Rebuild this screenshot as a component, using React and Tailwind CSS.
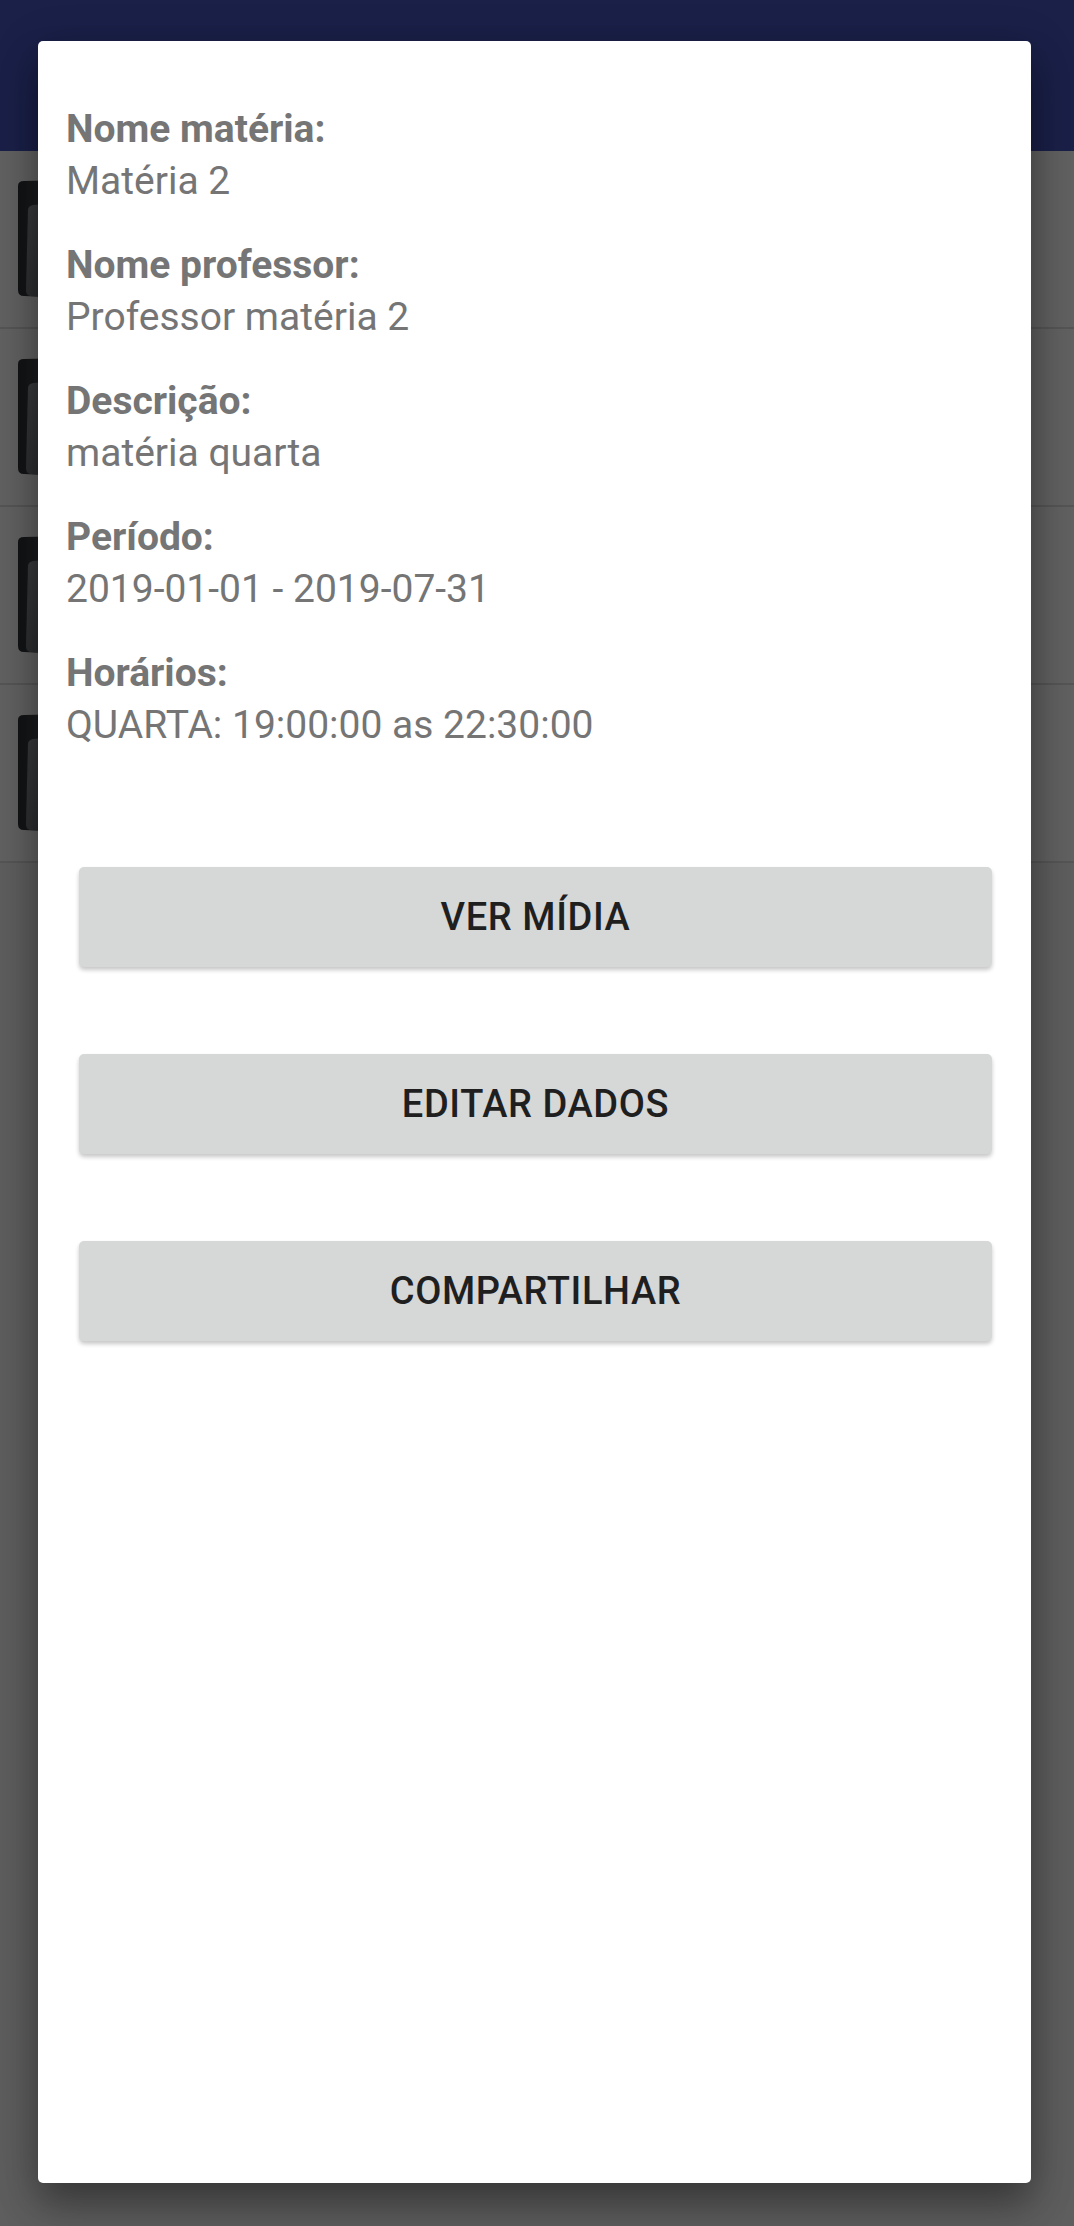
import React from 'react';

const fields = [
  { label: 'Nome matéria:', value: 'Matéria 2' },
  { label: 'Nome professor:', value: 'Professor matéria 2' },
  { label: 'Descrição:', value: 'matéria quarta' },
  { label: 'Período:', value: '2019-01-01 - 2019-07-31' },
  { label: 'Horários:', value: 'QUARTA: 19:00:00 as 22:30:00' },
];

const actions = ['VER MÍDIA', 'EDITAR DADOS', 'COMPARTILHAR'];

// livro escuro que aparece na lista atrás do diálogo
const BookIcon = () => (
  <svg width="60" height="118" viewBox="0 0 60 118">
    <defs>
      <linearGradient id="cover" x1="0" y1="0" x2="1" y2="0">
        <stop offset="0" stopColor="#111214" />
        <stop offset="1" stopColor="#2a2b2d" />
      </linearGradient>
      <linearGradient id="page" x1="0" y1="0" x2="1" y2="1">
        <stop offset="0" stopColor="#3a3b3d" />
        <stop offset="1" stopColor="#222325" />
      </linearGradient>
    </defs>
    <path d="M4 6 Q4 1 10 1 L56 0 L56 118 L10 116 Q4 116 4 110 Z" fill="url(#cover)" />
    <path d="M14 30 Q14 26 19 25 L56 22 L56 118 L16 116 Q12 115 12 110 Z" fill="url(#page)" />
  </svg>
);

const ListRow = () => (
  <div className="h-[178px] border-b-2 border-[#555555] bg-[#616161] flex items-center pl-[14px]">
    <BookIcon />
  </div>
);

export default function App() {
  return (
    <div className="relative w-[1074px] h-[2226px] overflow-hidden bg-[#5e5e5e] font-['Roboto','Liberation_Sans',sans-serif]">
      {/* tela de fundo escurecida */}
      <div className="h-[151px] bg-[#1a2048]" />
      <div className="flex flex-col">
        <ListRow />
        <ListRow />
        <ListRow />
        <ListRow />
      </div>

      {/* diálogo */}
      <div className="absolute left-[38px] top-[41px] w-[993px] h-[2142px] bg-white rounded-[5px] shadow-[0_24px_38px_rgba(0,0,0,0.28),0_9px_46px_rgba(0,0,0,0.22)]">
        <div className="pt-[62px] px-[28px] flex flex-col gap-[32px]">
          {fields.map((f) => (
            <div key={f.label} className="flex flex-col text-[39px] leading-[52px] text-[#757575]">
              <span className="font-bold">{f.label}</span>
              <span>{f.value}</span>
            </div>
          ))}
        </div>
        <div className="mt-[116px] pl-[41px] pr-[39px] flex flex-col gap-[87px]">
          {actions.map((a) => (
            <button
              key={a}
              className="h-[100px] w-full rounded-[5px] bg-[#d6d7d7] text-[#1f1f1f] text-[38px] font-medium tracking-[0.6px] shadow-[0_3px_4px_rgba(0,0,0,0.22)]"
            >
              {a}
            </button>
          ))}
        </div>
      </div>
    </div>
  );
}
